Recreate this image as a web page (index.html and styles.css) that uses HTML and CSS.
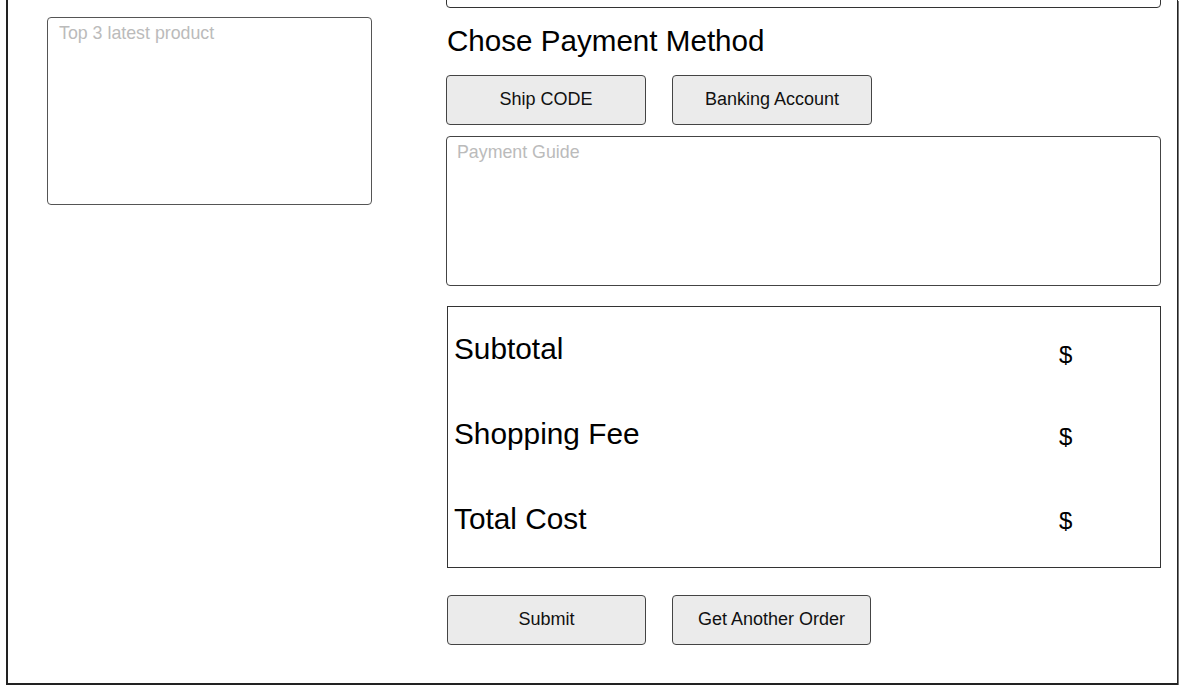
FILE: index.html
```html
<!DOCTYPE html>
<html>
<head>
<meta charset="utf-8">
<link rel="stylesheet" href="styles.css">
</head>
<body>
<div class="frame">
  <aside class="side">
    <div class="latest"><span class="ph">Top 3 latest product</span></div>
  </aside>
  <main class="main">
    <div class="prev-field"></div>
    <h2 class="title">Chose Payment Method</h2>
    <div class="btn-row">
      <button class="btn">Ship CODE</button>
      <button class="btn">Banking Account</button>
    </div>
    <div class="guide"><span class="ph">Payment Guide</span></div>
    <div class="summary">
      <div class="row"><span class="label">Subtotal</span><span class="val v1">$</span></div>
      <div class="row"><span class="label">Shopping Fee</span><span class="val v2">$</span></div>
      <div class="row"><span class="label">Total Cost</span><span class="val v3">$</span></div>
    </div>
    <div class="btn-row bottom">
      <button class="btn narrow">Submit</button>
      <button class="btn narrow">Get Another Order</button>
    </div>
  </main>
</div>
</body>
</html>
```

FILE: styles.css
```css
html, body {
  margin: 0;
  padding: 0;
  background: #fff;
}
body {
  font-family: "Liberation Sans", Arial, sans-serif;
  color: #000;
}
.frame {
  box-sizing: border-box;
  margin: 0 0 0 6px;
  width: 1172px;
  height: 685px;
  border: 2px solid #222;
  border-top: none;
  border-right-width: 1px;
  box-shadow: 1px 1px 0 #777;
  display: flex;
  overflow: hidden;
}
.side {
  width: 438px;
  padding: 17px 0 0 39px;
  box-sizing: border-box;
  flex: none;
}
.latest {
  box-sizing: border-box;
  width: 325px;
  height: 188px;
  border: 1px solid #555;
  border-radius: 4px;
  padding: 5px 11px;
}
.ph {
  color: #bbb;
  font-size: 17.8px;
}
.main {
  width: 715px;
  flex: none;
  display: flex;
  flex-direction: column;
}
.prev-field {
  box-sizing: border-box;
  height: 48px;
  margin-top: -40px;
  border: 1px solid #333;
  border-radius: 4px;
}
.title {
  margin: 16px 0 0 1px;
  font-size: 29.6px;
  font-weight: normal;
  line-height: 34px;
}
.btn-row {
  display: flex;
  gap: 26px;
  margin-top: 17px;
}
.btn {
  box-sizing: border-box;
  width: 200px;
  height: 50px;
  background: #ebebeb;
  border: 1px solid #444;
  border-radius: 4px;
  font-family: "Liberation Sans", Arial, sans-serif;
  font-size: 18px;
  color: #111;
  padding: 0 0 2px 0;
}
.btn.narrow {
  width: 199px;
}
.guide {
  box-sizing: border-box;
  margin-top: 11px;
  height: 150px;
  border: 1px solid #444;
  border-radius: 4px;
  padding: 5px 10px;
}
.summary {
  box-sizing: border-box;
  margin: 20px 0 0 1px;
  height: 262px;
  border: 1px solid #333;
  display: grid;
  grid-template-rows: 85px 85px 85px;
  padding-left: 6px;
}
.row {
  display: grid;
  grid-template-columns: 605px 1fr;
  align-items: center;
}
.label {
  font-size: 29.8px;
  line-height: 34px;
  margin-top: -2px;
}
.val {
  font-size: 24px;
  line-height: 28px;
}
.v1 { margin-top: 10px; }
.v2 { margin-top: 4px; }
.v3 { margin-top: 2px; }
.bottom {
  margin-top: 27px;
  padding-left: 1px;
  gap: 26px;
}
```
